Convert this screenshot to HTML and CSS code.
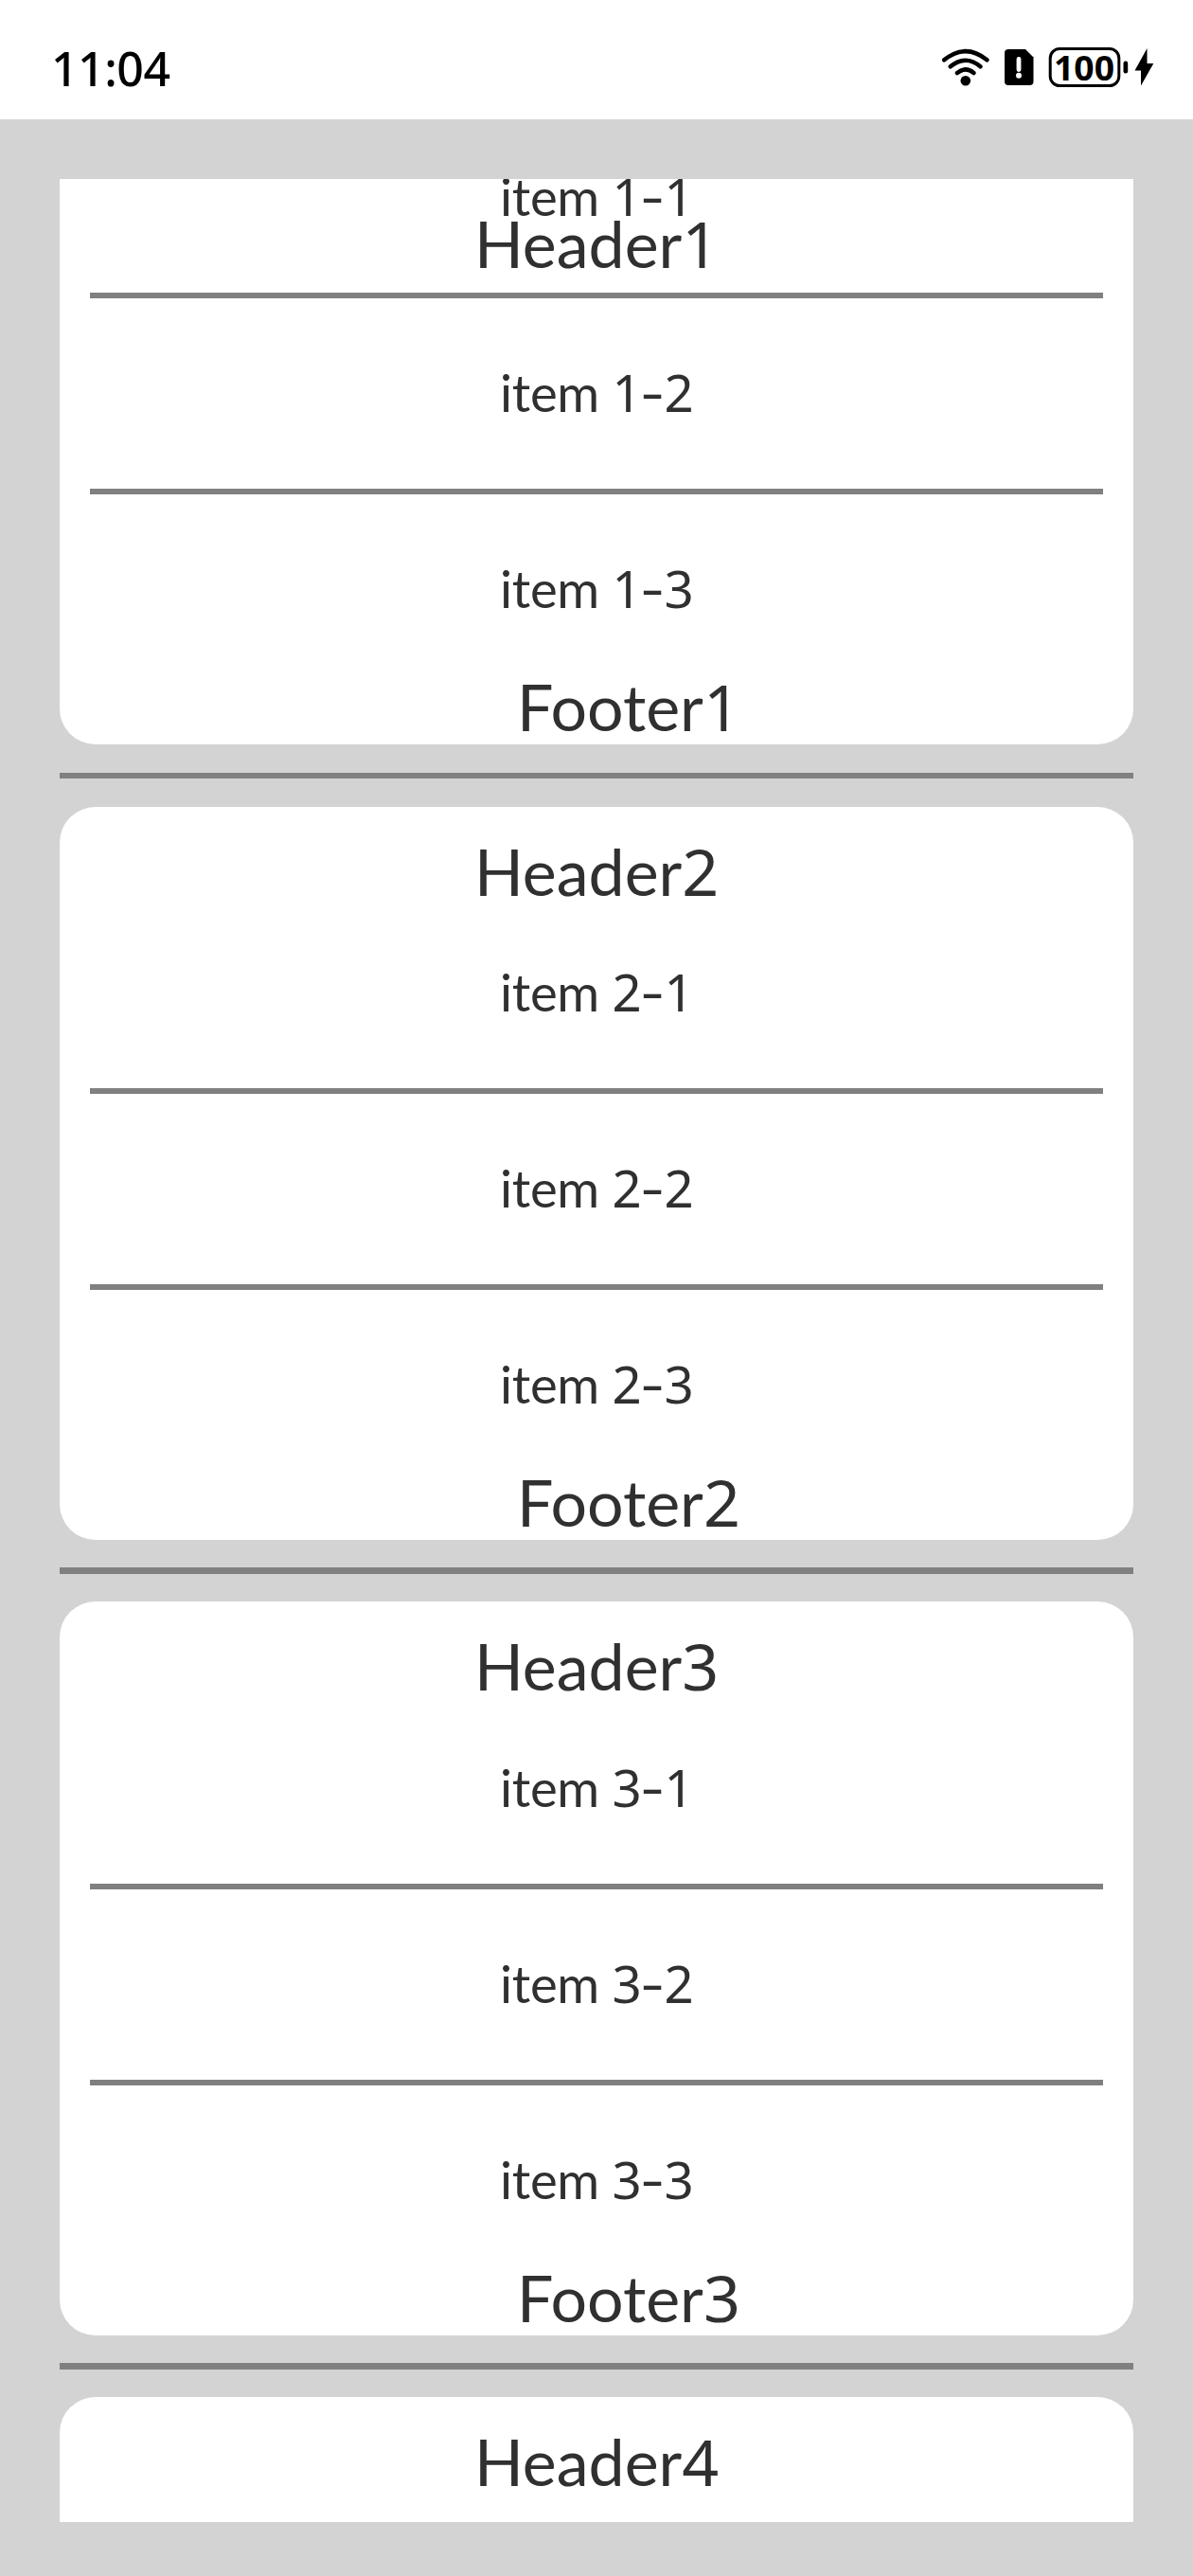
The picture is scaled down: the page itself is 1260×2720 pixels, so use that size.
FILE: index.html
```html
<!DOCTYPE html>
<html lang="en">
<head>
<meta charset="utf-8">
<title>List</title>
<link rel="stylesheet" href="styles.css">
</head>
<body>
<header class="status">
  <span class="time">11:04</span>
  <svg class="status-icons" width="240" height="60" viewBox="0 0 240 60">
    <g fill="none" stroke="#000" stroke-width="4.5" stroke-linecap="round">
      <path d="M12.200 23.300Q34.800 5 57.400 23.300M18.800 30.300Q34.800 17.200 50.400 30.300M26 37Q34.800 29.800 43.400 37"/>
    </g>
    <circle cx="34.8" cy="45.3" r="5.3"/>
    <path d="M80 12H98L106.500 20.500V46Q106.500 50 102.500 50H80Q76 50 76 46V16Q76 12 80 12Z"/>
    <path d="M91 22.500V33.500" stroke="#fff" stroke-width="4.800" stroke-linecap="round"/>
    <circle cx="91" cy="39.800" r="3" fill="#fff"/>
    <rect x="124.200" y="11.500" width="72.600" height="39" rx="10" fill="none" stroke="#000" stroke-width="3"/>
    <text class="battery" x="128" y="45" textLength="64" lengthAdjust="spacingAndGlyphs">100</text>
    <rect x="201.500" y="24.500" width="4.700" height="13" rx="2.300"/>
    <path d="M226.500 11V27H233.300L220 50.500V34.500H213.500Z"/>
  </svg>
</header>
<main class="page">
  <div class="list">
    <section class="card">
      <h2 class="head"><span class="word">Header</span>1</h2>
      <div class="item"><span class="word">item </span>1<span class="dash">-</span>1</div>
      <div class="item"><span class="word">item </span>1<span class="dash">-</span>2</div>
      <div class="item"><span class="word">item </span>1<span class="dash">-</span>3</div>
      <div class="foot"><span class="word">Footer</span>1</div>
    </section>
    <section class="card">
      <h2 class="head"><span class="word">Header</span>2</h2>
      <div class="item"><span class="word">item </span>2<span class="dash">-</span>1</div>
      <div class="item"><span class="word">item </span>2<span class="dash">-</span>2</div>
      <div class="item"><span class="word">item </span>2<span class="dash">-</span>3</div>
      <div class="foot"><span class="word">Footer</span>2</div>
    </section>
    <section class="card">
      <h2 class="head"><span class="word">Header</span>3</h2>
      <div class="item"><span class="word">item </span>3<span class="dash">-</span>1</div>
      <div class="item"><span class="word">item </span>3<span class="dash">-</span>2</div>
      <div class="item"><span class="word">item </span>3<span class="dash">-</span>3</div>
      <div class="foot"><span class="word">Footer</span>3</div>
    </section>
    <section class="card last">
      <h2 class="head"><span class="word">Header</span>4</h2>
    </section>
  </div>
</main>
</body>
</html>
```
FILE: styles.css
```css
* { box-sizing: border-box; }
body {
  margin: 0;
  width: 1260px;
  height: 2720px;
  overflow: hidden;
  display: flex;
  flex-direction: column;
  background: #fff;
  color: #303030;
  font-family: "Noto Sans", sans-serif;
}
.status {
  flex: none;
  height: 126px;
  padding: 30px 35px 0 54px;
  display: flex;
  justify-content: space-between;
  color: #000;
}
.time { font-size: 50px; font-weight: 500; line-height: 85px; letter-spacing: -0.5px; }
.status-icons { flex: none; margin-top: 10px; }
.battery { font-size: 36px; font-weight: 700; }
.page {
  flex: none;
  height: 2594px;
  padding: 63px 63px 57px;
  background: #d3d3d3;
}
.list {
  height: 2474px;
  overflow: hidden;
}
.card {
  position: relative;
  height: 774.4px;
  margin-bottom: 65.3px;
  background: #fff;
  border-radius: 37.800px;
}
.card:first-child { margin-top: -177.200px; }
.card:not(:last-child)::after {
  content: "";
  position: absolute;
  left: 0;
  right: 0;
  bottom: -36px;
  height: 6.500px;
  background: #808080;
}
.head, .item, .foot { margin: 0; font-weight: 400; white-space: pre; }
.word { font-family: Lato, sans-serif; line-height: 0; letter-spacing: 0; }
.head {
  position: sticky;
  top: 0;
  z-index: 1;
  height: 90.400px;
  padding: 22px 0 0 438px;
  font-size: 68px;
  line-height: 92px;
}
.item {
  height: 207px;
  margin: 0 32px;
  padding-left: 433px;
  font-size: 54.500px;
  line-height: 210px;
  letter-spacing: -2.300px;
}
.item .word { letter-spacing: -0.300px; }
.item + .item {
  background: linear-gradient(#808080, #808080) 0 0 / 100% 6px no-repeat;
}
.dash {
  display: inline-block;
  width: 26px;
  padding-left: 5px;
  line-height: 1;
  transform: translateY(-1.500px) scaleX(1.400);
}
.foot {
  height: 60px;
  padding-left: 483px;
  font-size: 68px;
  line-height: 45px;
}
.last {
  height: 132.500px;
  margin-bottom: 0;
  border-bottom-left-radius: 0;
  border-bottom-right-radius: 0;
}
```
